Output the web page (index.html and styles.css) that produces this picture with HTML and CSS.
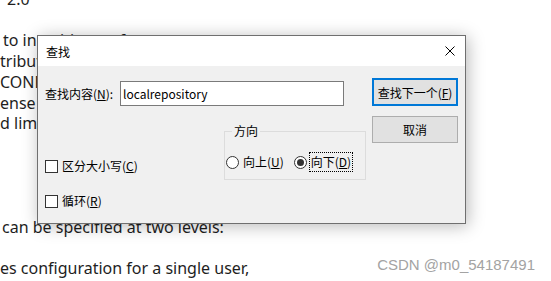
FILE: index.html
```html
<!DOCTYPE html>
<html lang="zh-CN">

<head>
    <meta charset="UTF-8">
    <title>查找</title>
    <link rel="stylesheet" href="styles.css">
</head>

<body>
    <div class="doc">
        <div class="ln ind7">2.0</div>
        <div class="ln">&nbsp;</div>
        <div class="ln ind3">to in writing, software</div>
        <div class="ln">tributed on an "AS IS"</div>
        <div class="ln">CONDITIONS OF ANY</div>
        <div class="ln">ense for the</div>
        <div class="ln">d limitations</div>
        <div class="ln">&nbsp;</div>
        <div class="ln">&nbsp;</div>
        <div class="ln">&nbsp;</div>
        <div class="ln">&nbsp;</div>
        <div class="ln ind2">can be specified at two levels:</div>
        <div class="ln">&nbsp;</div>
        <div class="ln">es configuration for a single user,</div>
    </div>

    <div class="dialog">
        <div class="titlebar">
            <span>查找</span>
            <svg class="close" width="10" height="10" viewBox="0 0 10 10">
                <path d="M0.5 0.5 L9.5 9.5 M9.5 0.5 L0.5 9.5" stroke="#000" stroke-width="1" fill="none" />
            </svg>
        </div>
        <div class="dlg-body">
            <div class="left-col">
                <div class="find-row">
                    <label for="what">查找内容(<u>N</u>):</label>
                    <input type="text" id="what" value="localrepository">
                </div>
                <div class="options">
                    <div class="check check-case"><span class="box"></span><span>区分大小写(<u>C</u>)</span></div>
                    <fieldset class="direction">
                        <legend>方向</legend>
                        <div class="radios">
                            <div class="radio"><span class="dot"></span><span>向上(<u>U</u>)</span></div>
                            <div class="radio on"><span class="dot"></span><span class="focus">向下(<u>D</u>)</span></div>
                        </div>
                    </fieldset>
                    <div class="check check-wrap"><span class="box"></span><span>循环(<u>R</u>)</span></div>
                </div>
            </div>
            <div class="right-col">
                <button class="btn default">查找下一个(<u>F</u>)</button>
                <button class="btn">取消</button>
            </div>
        </div>
    </div>

    <div class="watermark">CSDN @m0_54187491</div>
</body>

</html>
```

FILE: styles.css
```css
body {
    margin: 0;
    background-color: #fff;
    overflow: hidden;
    height: 281px;
}

.doc {
    margin-top: -11px;
    font-family: "Noto Sans", sans-serif;
    font-size: 16px;
    line-height: 20.7px;
    color: #1e1e1e;
    white-space: nowrap;
}

.ind7 {
    padding-left: 7px;
}

.ind3 {
    padding-left: 3px;
}

.ind2 {
    padding-left: 2px;
}

.dialog {
    position: absolute;
    left: 37px;
    top: 35px;
    width: 429px;
    height: 189px;
    box-sizing: border-box;
    border: 1px solid #6f6f6f;
    box-shadow: 2px 2px 16px rgba(0, 0, 0, 0.28);
    font-family: "Noto Sans CJK SC", sans-serif;
    font-size: 12px;
    color: #000;
    display: flex;
    flex-direction: column;
}

.titlebar {
    height: 30px;
    background-color: #fff;
    display: flex;
    align-items: center;
    padding: 0 10px 0 8px;
}

.close {
    margin-left: auto;
}

.dlg-body {
    flex: 1;
    background-color: #f0f0f0;
    display: flex;
    gap: 6px;
    padding: 12px 7px 0 7px;
}

.left-col {
    width: 321px;
    padding-top: 3px;
}

.find-row {
    display: flex;
    align-items: center;
    height: 25px;
}

.find-row label {
    width: 75px;
}

.find-row input {
    width: 224px;
    height: 25px;
    box-sizing: border-box;
    border: 1px solid #7a7a7a;
    background-color: #fff;
    padding: 0 2px;
    margin: 0;
    font-family: "Noto Sans CJK SC", sans-serif;
    font-size: 12px;
    color: #000;
    outline: none;
}

.options {
    display: grid;
    grid-template-columns: 179px 142px;
    margin-top: 17px;
}

.check {
    display: flex;
    align-items: center;
    gap: 4px;
    line-height: 16px;
}

.box {
    width: 13px;
    height: 13px;
    box-sizing: border-box;
    border: 1px solid #333;
    background-color: #fff;
}

.check-case {
    grid-column: 1;
    grid-row: 1;
    align-self: end;
    margin-bottom: 6px;
}

.check-wrap {
    grid-column: 1 / span 2;
    grid-row: 2;
    margin-top: 13px;
}

.direction {
    grid-column: 2;
    grid-row: 1;
    margin: 0;
    padding: 0;
    border: 1px solid #dcdcdc;
    min-width: 0;
}

.direction legend {
    margin-left: 7px;
    padding: 0 2px;
    line-height: 16px;
}

.radios {
    display: flex;
    align-items: center;
    gap: 10px;
    padding: 13px 0 7px 1px;
}

.radio {
    display: flex;
    align-items: center;
    gap: 4px;
    line-height: 16px;
}

.dot {
    width: 13px;
    height: 13px;
    box-sizing: border-box;
    border: 1px solid #333;
    border-radius: 50%;
    background-color: #fff;
    display: flex;
    align-items: center;
    justify-content: center;
}

.radio.on .dot::after {
    content: "";
    width: 7px;
    height: 7px;
    border-radius: 50%;
    background-color: #333;
}

.focus {
    border: 1px dotted #000;
    padding: 1px 1px;
    margin-left: -2px;
}

.right-col {
    width: 86px;
    display: flex;
    flex-direction: column;
    gap: 10px;
}

.btn {
    height: 27px;
    margin: 0;
    padding: 0;
    background-color: #e1e1e1;
    border: 1px solid #adadad;
    font-family: "Noto Sans CJK SC", sans-serif;
    font-size: 12px;
    color: #000;
}

.btn.default {
    height: 28px;
    border: 2px solid #0078d7;
}

.watermark {
    position: absolute;
    right: 16px;
    top: 256px;
    font-family: "Liberation Sans", sans-serif;
    font-size: 15px;
    color: #a3a3a3;
}
```
